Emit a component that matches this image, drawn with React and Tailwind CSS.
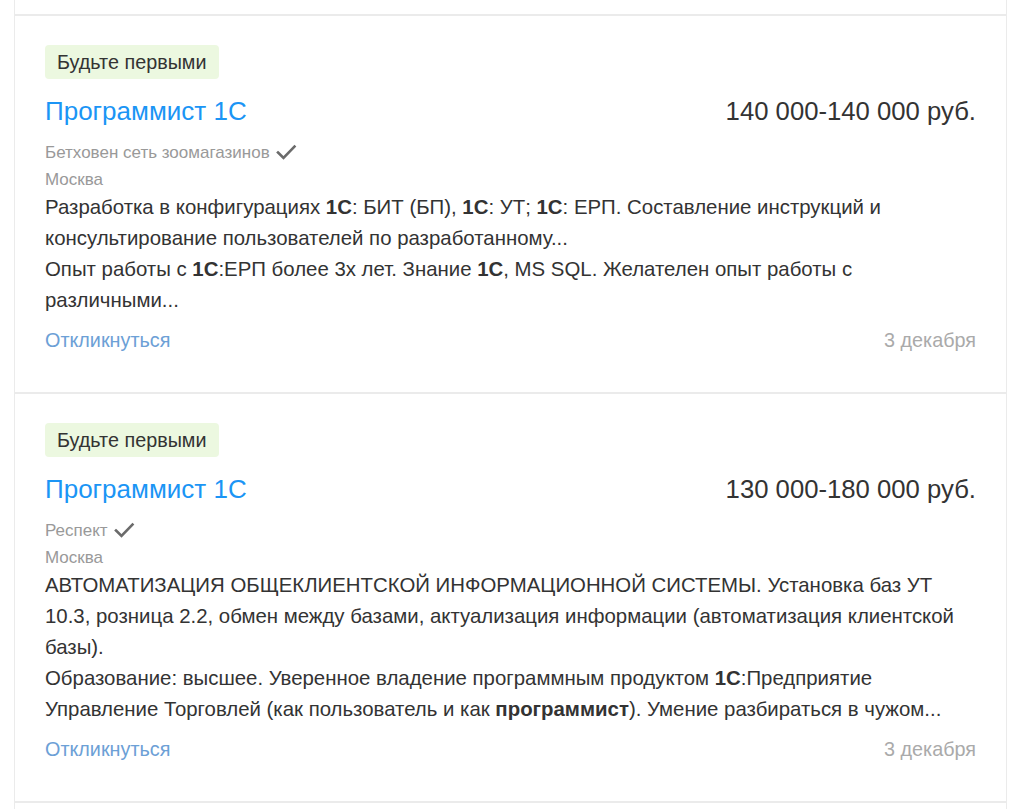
import React from "react";

const Check = () => (
  <svg width="22" height="18" viewBox="0 0 22 18" className="inline-block ml-[5px] -mt-[3px]" fill="none">
    <path d="M3 9.5 L8.5 15 L19.5 3.5" stroke="#6b6b6b" strokeWidth="2.6" strokeLinecap="square" />
  </svg>
);

function Card({ company, salary, desc }) {
  return (
    <div className="border-b-2 border-[#ebebeb] px-[30px] pt-[29px] pb-[37px]">
      <div className="inline-block bg-[#ecf8e0] rounded-[4px] px-[12px] h-[34px] leading-[34px] text-[19.8px] text-[#333]">
        Будьте первыми
      </div>
      <div className="mt-[14px] flex justify-between items-center leading-[36px]">
        <a className="text-[26px] text-[#1b95f5]">Программист 1С</a>
        <div className="text-[25.7px] text-[#333]">{salary}</div>
      </div>
      <div className="mt-[10px] text-[17px] text-[#999] leading-[27px]">
        {company}
        <Check />
      </div>
      <div className="text-[17px] text-[#999] leading-[27px]">Москва</div>
      <div className="mt-[-1px] text-[20.4px] text-[#333] leading-[31px] whitespace-nowrap">{desc}</div>
      <div className="mt-[9px] flex justify-between leading-[30px] text-[19.8px]">
        <a className="text-[#6ca0d6]">Откликнуться</a>
        <span className="text-[#aaa]">3 декабря</span>
      </div>
    </div>
  );
}

export default function App() {
  return (
    <div className="bg-white min-h-[809px] overflow-hidden font-['Liberation_Sans',Arial,sans-serif]">
      <div className="ml-[14px] w-[993px] border-x border-[#ebebeb]">
        <div className="h-[16px] border-b-2 border-[#ebebeb]" />
        <Card
          company="Бетховен сеть зоомагазинов"
          salary="140 000-140 000 руб."
          desc={
            <>
              <div>
                Разработка в конфигурациях <b>1С</b>: БИТ (БП), <b>1С</b>: УТ; <b>1С</b>: ЕРП. Составление инструкций и
                <br />
                консультирование пользователей по разработанному...
              </div>
              <div>
                Опыт работы с <b>1С</b>:ЕРП более 3х лет. Знание <b>1С</b>, MS SQL. Желателен опыт работы с
                <br />
                различными...
              </div>
            </>
          }
        />
        <Card
          company="Респект"
          salary="130 000-180 000 руб."
          desc={
            <>
              <div>
                АВТОМАТИЗАЦИЯ ОБЩЕКЛИЕНТСКОЙ ИНФОРМАЦИОННОЙ СИСТЕМЫ. Установка баз УТ
                <br />
                10.3, розница 2.2, обмен между базами, актуализация информации (автоматизация клиентской
                <br />
                базы).
              </div>
              <div>
                Образование: высшее. Уверенное владение программным продуктом <b>1С</b>:Предприятие
                <br />
                Управление Торговлей (как пользователь и как <b>программист</b>). Умение разбираться в чужом...
              </div>
            </>
          }
        />
        <div className="h-[40px]" />
      </div>
    </div>
  );
}
